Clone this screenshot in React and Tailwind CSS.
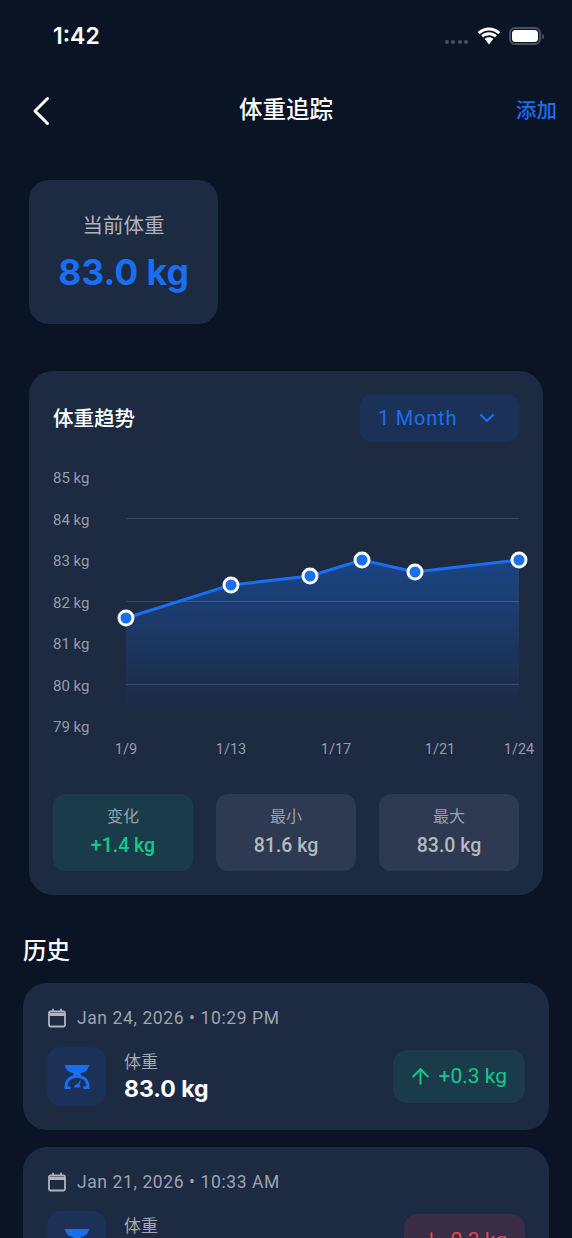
import React from "react";
import { ChevronDown, ArrowUp, ArrowDown } from "lucide-react";

const latin = "font-['Roboto','Noto_Sans_CJK_SC',sans-serif]";
const inter = "font-['Inter','Noto_Sans_CJK_SC',sans-serif]";

function ScaleIcon() {
  return (
    <svg width="28" height="28" viewBox="0 0 28 28" fill="#1a6ff0">
      <path d="M1.500 2h25l-2.600 5.200c-1.900 1.600-4 2.500-6.200 2.800v2.200c5.300 1.300 8.800 5.800 8.800 11.600v2.200h-6v-2.800h3c-.2-4.600-3.600-8.400-9.500-8.400s-9.300 3.800-9.500 8.400h3v2.800h-6v-2.200c0-5.800 3.500-10.300 8.800-11.600v-2.200c-2.200-.3-4.300-1.200-6.200-2.800z" />
      <path d="M10.800 24.500c.2-2 1.500-3.200 3.600-3.600l3.400-4.500-1.200 5.500c.7.700 1 1.600 1 2.600z" />
    </svg>
  );
}

function CalendarIcon() {
  return (
    <svg width="20" height="20" viewBox="0 0 20 20" fill="none" stroke="#b0b5bd">
      <rect x="2" y="3.500" width="16" height="15" rx="1.500" strokeWidth="1.800" />
      <path d="M2 6.500h16" strokeWidth="3" />
      <path d="M6 .8v3M14 .8v3" strokeWidth="1.800" />
    </svg>
  );
}

function Stat({ label, value, green }) {
  return (
    <div className={`flex h-[77px] flex-col items-center justify-center rounded-xl ${green ? "bg-[#1a3b4a]" : "bg-[#2d3a52]"}`}>
      <span className="text-[16px] leading-[24px] text-[#9aa0ab]">{label}</span>
      <span className={`mt-[3px] text-[19.500px] leading-[28px] font-medium ${green ? "text-[#14c88f]" : "text-[#b4b9c1]"}`}>{value}</span>
    </div>
  );
}

function HistoryCard({ date, value, up, change }) {
  const Arrow = up ? ArrowUp : ArrowDown;
  return (
    <div className="rounded-3xl bg-[#1c2a42] pt-[25px] pr-6 pb-6 pl-6">
      <div className="flex h-5 items-center gap-[10px]">
        <CalendarIcon />
        <span className="text-[17.500px] tracking-[0.6px] text-[#9ea3ad]">{date}</span>
      </div>
      <div className="mt-[19px] flex items-center">
        <div className="flex h-[59px] w-[59px] items-center justify-center rounded-[14px] bg-[#1b3157]">
          <ScaleIcon />
        </div>
        <div className="ml-[18px] flex flex-1 flex-col">
          <span className="text-[17px] leading-[24px] text-[#a3a8b1]">体重</span>
          <span className={`${inter} text-[23px] leading-[30px] font-bold text-white`}>{value}</span>
        </div>
        <div className={`flex h-[53px] items-center gap-[6px] rounded-[14px] pr-[18px] pl-[15px] text-[21px] ${up ? "bg-[#1a3b4a] text-[#14c88f]" : "bg-[#3a2d45] text-[#e5484d]"}`}>
          <Arrow size={25} strokeWidth={1.900} />
          <span>{change}</span>
        </div>
      </div>
    </div>
  );
}

const yLabels = ["85 kg", "84 kg", "83 kg", "82 kg", "81 kg", "80 kg", "79 kg"];
const xLabels = [["1/9", 73], ["1/13", 178], ["1/17", 283], ["1/21", 387], ["1/24", 466]];
const pts = [[0, 141], [105, 108], [184, 99], [236, 83], [289, 95], [393, 83]];

function Chart() {
  const line = pts.map((p) => p.join(",")).join(" ");
  return (
    <div className="relative mt-[26px] h-[314px]">
      <div className="flex h-[269px] flex-col justify-between text-[15px] leading-[20px] text-[#969ca8]">
        {yLabels.map((l) => (
          <span key={l}>{l}</span>
        ))}
      </div>
      <svg className="absolute top-[9px] left-[73px] overflow-visible" width="393" height="260" viewBox="0 0 393 260" fill="none">
        <defs>
          <linearGradient id="fade" x1="0" y1="83" x2="0" y2="235" gradientUnits="userSpaceOnUse">
            <stop offset="0" stopColor="#1a6ff0" stopOpacity="0.38" />
            <stop offset="1" stopColor="#1a6ff0" stopOpacity="0" />
          </linearGradient>
        </defs>
        <polygon points={`0,235 ${line} 393,235`} fill="url(#fade)" />
        {[41, 124, 207].map((y) => (
          <line key={y} x1="0" x2="393" y1={y + 0.5} y2={y + 0.5} stroke="#ffffff" strokeOpacity="0.14" />
        ))}
        <polyline points={line} stroke="#1a6ff0" strokeWidth="3" strokeLinejoin="round" />
        {pts.map(([x, y]) => (
          <circle key={x} cx={x} cy={y} r="7" fill="#1a6ff0" stroke="#ffffff" strokeWidth="3" />
        ))}
      </svg>
      {xLabels.map(([t, x]) => (
        <span key={t} className="absolute top-[272px] -translate-x-1/2 text-[14.500px] leading-[20px] text-[#969ca8]" style={{ left: x }}>
          {t}
        </span>
      ))}
    </div>
  );
}

export default function App() {
  return (
    <div className={`${latin} h-[1238px] w-[572px] overflow-hidden bg-[#0a1425]`}>
      <div className="flex h-[72px] items-center justify-between pr-[28px] pl-[53px]">
        <span className={`${inter} text-[23px] font-semibold text-white`}>1:42</span>
        <div className="flex items-center">
          <div className="mt-3 mr-[9px] flex gap-[2.500px]">
            {[0, 1, 2, 3].map((i) => (
              <span key={i} className="h-1 w-1 rounded-full bg-[#4a5160]" />
            ))}
          </div>
          <svg width="24" height="18" viewBox="0 0 24 18" fill="#ffffff">
            <path d="M12 3.500c3.600 0 6.900 1.400 9.300 3.700l1.900-2.300C20.300 2.100 16.300.4 12 .4S3.700 2.100.8 4.900l1.900 2.300C5.100 4.900 8.400 3.500 12 3.500z" />
            <path d="M12 8.300c2.300 0 4.300.9 5.900 2.300l1.900-2.300C17.700 6.400 15 5.300 12 5.300s-5.700 1.100-7.800 3l1.900 2.300c1.600-1.400 3.600-2.300 5.900-2.300z" />
            <path d="M12 10.200c-1.700 0-3.200.6-4.400 1.600L12 17.400l4.400-5.600c-1.200-1-2.700-1.600-4.400-1.600z" />
          </svg>
          <div className="ml-[8px] flex h-[18px] w-[32px] items-center rounded-[6px] border-2 border-[#4a5160] p-[1px]">
            <div className="h-full w-full rounded-[3.500px] bg-white" />
          </div>
          <div className="ml-[1px] h-[5px] w-[2px] rounded-r-sm bg-[#4a5160]" />
        </div>
      </div>

      <div className="relative flex h-[76px] items-center justify-center pt-[2px]">
        <svg className="absolute top-[24px] left-[32px]" width="18" height="30" viewBox="0 0 18 30" fill="none" stroke="#ffffff" strokeWidth="3" strokeLinecap="round" strokeLinejoin="round">
          <path d="M15.500 2.500 3 15l12.500 12.500" />
        </svg>
        <span className="text-[23.500px] font-medium text-white">体重追踪</span>
        <span className="absolute right-[15px] text-[20.500px] font-medium text-[#1a6ff0]">添加</span>
      </div>

      <div className="px-[29px] pt-[32px]">
        <div className="flex h-[144px] w-[189px] flex-col items-center justify-center rounded-[20px] bg-[#1c2a42] pt-[4px]">
          <span className="text-[20.500px] leading-[28px] text-[#aeb3bb]">当前体重</span>
          <span className={`${inter} mt-[10px] text-[35.500px] leading-[46px] font-bold text-[#1a6ff0]`}>83.0 kg</span>
        </div>

        <div className="mt-[47px] h-[524px] rounded-3xl bg-[#1c2a42] px-6 pt-[23px]">
          <div className="flex h-[48px] items-center justify-between">
            <span className="pt-[2px] text-[20.500px] font-medium text-white">体重趋势</span>
            <div className="flex h-[48px] w-[159px] items-center rounded-xl bg-[#1b3157] pl-[18px] text-[#1a6ff0]">
              <span className="text-[20px] font-[450] tracking-[0.8px]">1 Month</span>
              <ChevronDown className="ml-[18px]" size={24} strokeWidth={2.300} />
            </div>
          </div>
          <Chart />
          <div className="mt-[12px] grid grid-cols-3 gap-[23px]">
            <Stat label="变化" value="+1.4 kg" green />
            <Stat label="最小" value="81.6 kg" />
            <Stat label="最大" value="83.0 kg" />
          </div>
        </div>
      </div>

      <div className="px-[23px]">
        <div className="mt-[38px] text-[23.500px] leading-[36px] font-medium text-white">历史</div>
        <div className="mt-[14px] flex flex-col gap-[17px]">
          <HistoryCard date="Jan 24, 2026 • 10:29 PM" value="83.0 kg" up change="+0.3 kg" />
          <HistoryCard date="Jan 21, 2026 • 10:33 AM" value="82.7 kg" change="0.3 kg" />
        </div>
      </div>
    </div>
  );
}
